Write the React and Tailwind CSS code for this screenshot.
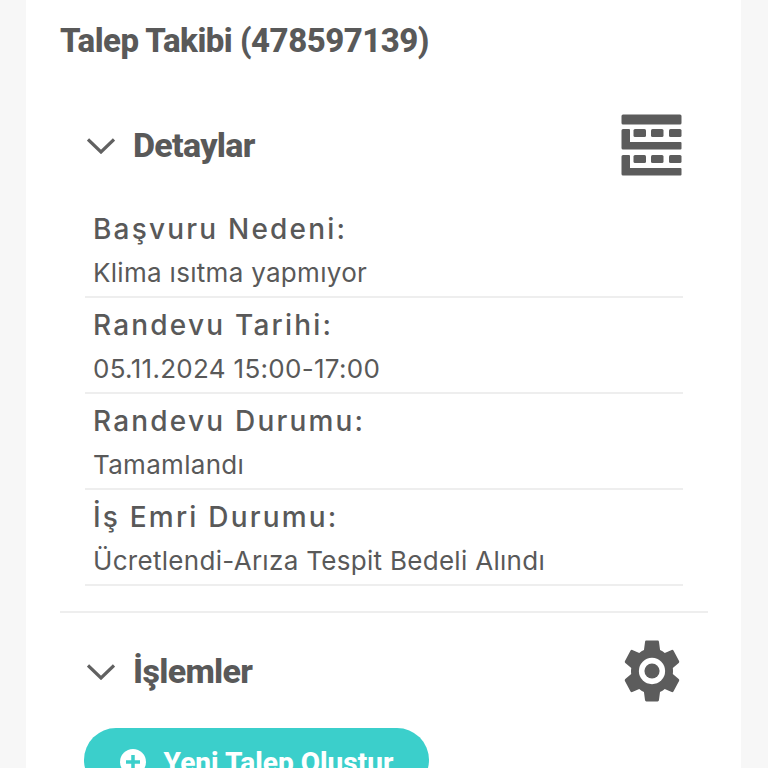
const rows = [
  { label: 'Başvuru Nedeni:', value: 'Klima ısıtma yapmıyor' },
  { label: 'Randevu Tarihi:', value: '05.11.2024 15:00-17:00' },
  { label: 'Randevu Durumu:', value: 'Tamamlandı' },
  { label: 'İş Emri Durumu:', value: 'Ücretlendi-Arıza Tespit Bedeli Alındı' },
];

const headingFont = "font-['Roboto',sans-serif]";

function Chevron() {
  return (
    <svg width="28" height="16" viewBox="0 0 28 16" fill="none" stroke="#616161" strokeWidth="3.200" className="ml-[2px] mt-[2px] shrink-0">
      <path d="M1 1.500 14 14 27 1.500" />
    </svg>
  );
}

function TableIcon() {
  return (
    <svg width="62" height="62" viewBox="0 0 62 62" fill="#5c5c5c" className="shrink-0">
      <rect x="0.5" y="0.5" width="60" height="10" rx="1.5" />
      <rect x="12.5" y="15" width="12.5" height="8" rx="1.5" />
      <rect x="30" y="15" width="12.5" height="8" rx="1.5" />
      <rect x="48" y="15" width="12.5" height="8" rx="1.5" />
      <path d="M2 15h6a1 1 0 0 1 1 1v12h50.500a1 1 0 0 1 1 1v5.500a1 1 0 0 1-1 1H2a1.500 1.500 0 0 1-1.500-1.500V16.500A1.500 1.500 0 0 1 2 15z" />
      <rect x="12.500" y="41" width="12.500" height="8" rx="1.500" />
      <rect x="30" y="41" width="12.500" height="8" rx="1.500" />
      <rect x="48" y="41" width="12.500" height="8" rx="1.500" />
      <path d="M2 41h6a1 1 0 0 1 1 1v12h50.500a1 1 0 0 1 1 1v5.500a1 1 0 0 1-1 1H2a1.500 1.500 0 0 1-1.500-1.500V42.500A1.500 1.500 0 0 1 2 41z" />
    </svg>
  );
}

function GearIcon() {
  return (
    <svg width="70" height="76" viewBox="0 0 24 24" preserveAspectRatio="none" className="mr-[-4px] shrink-0">
      <path
        fill="#5c5c5c"
        d="M19.14 12.94c.04-.3.06-.61.06-.94 0-.32-.02-.64-.07-.94l2.03-1.58c.18-.14.23-.41.12-.61l-1.92-3.32c-.12-.22-.37-.29-.59-.22l-2.39.96c-.5-.38-1.03-.7-1.62-.94l-.36-2.54c-.04-.24-.24-.41-.48-.41h-3.84c-.24 0-.43.17-.47.41l-.36 2.54c-.59.24-1.13.57-1.62.94l-2.39-.96c-.22-.08-.47 0-.59.22L2.74 8.87c-.12.21-.08.47.12.61l2.03 1.58c-.05.3-.09.63-.09.94s.02.64.07.94l-2.03 1.58c-.18.14-.23.41-.12.61l1.92 3.32c.12.22.37.29.59.22l2.39-.96c.5.38 1.03.7 1.62.94l.36 2.54c.05.24.24.41.48.41h3.84c.24 0 .44-.17.47-.41l.36-2.54c.59-.24 1.13-.56 1.62-.94l2.39.96c.22.08.47 0 .59-.22l1.92-3.32c.12-.22.07-.47-.12-.61l-2.01-1.58z"
      />
      <ellipse cx="12" cy="12" rx="4.500" ry="4.150" fill="#ffffff" />
      <ellipse cx="12" cy="12" rx="2.600" ry="2.400" fill="#5c5c5c" />
    </svg>
  );
}

function PlusCircle() {
  return (
    <svg width="26" height="26" viewBox="0 0 26 26" className="mt-[2px] shrink-0">
      <circle cx="13" cy="13" r="13" fill="#ffffff" />
      <path d="M13 6v14M6 13h14" stroke="#3bcfcb" strokeWidth="3.500" />
    </svg>
  );
}

export default function App() {
  return (
    <div className="h-[768px] overflow-hidden bg-[#f7f7f7] pl-[26px] pr-[27px]">
      <div className="h-full bg-white pl-[34px] pr-[33px] font-['Inter',sans-serif] text-[#595959]">
        <h1 className={`${headingFont} pt-[19px] text-[33px] font-extrabold leading-[44px] tracking-[-0.5px]`}>
          Talep Takibi (478597139)
        </h1>

        <section className="mt-[45px] px-[25px]">
          <div className="flex h-[74px] items-center justify-between">
            <div className="flex items-center gap-[18px]">
              <Chevron />
              <h2 className={`${headingFont} text-[34px] font-extrabold leading-[40px] tracking-[-0.7px]`}>Detaylar</h2>
            </div>
            <TableIcon />
          </div>
          <div className="mt-[20px]">
            {rows.map((row) => (
              <div key={row.label} className="h-[96px] border-b-2 border-[#eeeeee] pl-[8px]">
                <div className="pt-[7px] text-[28px] font-medium leading-[40px] tracking-[2.200px]">{row.label}</div>
                <div className="pt-[4px] text-[26px] leading-[40px] tracking-[0.300px]">{row.value}</div>
              </div>
            ))}
          </div>
        </section>

        <div className="mt-[25px] h-[2px] bg-[#eeeeee]" />

        <section className="px-[25px]">
          <div className="flex h-[115px] items-center justify-between">
            <div className="flex items-center gap-[18px]">
              <Chevron />
              <h2 className={`${headingFont} text-[34px] font-extrabold leading-[40px] tracking-[-0.7px]`}>İşlemler</h2>
            </div>
            <GearIcon />
          </div>
          <button className="ml-[-1px] flex h-[64px] w-[345px] items-start justify-center gap-[18px] rounded-[32px] bg-[#3bcfcb] pt-[19px] text-white">
            <PlusCircle />
            <span className={`${headingFont} text-[28px] font-extrabold leading-[32px]`}>Yeni Talep Oluştur</span>
          </button>
        </section>
      </div>
    </div>
  );
}
